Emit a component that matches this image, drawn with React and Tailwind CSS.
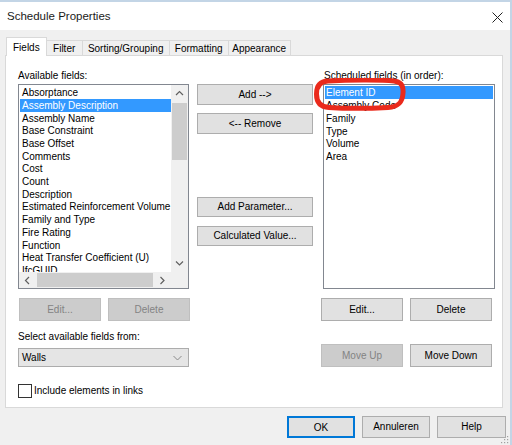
import React from "react";

const leftItems = [
  "Absorptance",
  "Assembly Description",
  "Assembly Name",
  "Base Constraint",
  "Base Offset",
  "Comments",
  "Cost",
  "Count",
  "Description",
  "Estimated Reinforcement Volume",
  "Family and Type",
  "Fire Rating",
  "Function",
  "Heat Transfer Coefficient (U)",
  "IfcGUID",
];
const rightItems = ["Element ID", "Assembly Code", "Family", "Type", "Volume", "Area"];

function Btn({ children, className = "", disabled = false }) {
  return (
    <div
      className={
        "flex items-center justify-center border text-[10px] leading-none " +
        (disabled
          ? "bg-[#cccccc] border-[#bfbfbf] text-[#838383] "
          : "bg-[#e1e1e1] border-[#adadad] text-black ") +
        className
      }
    >
      {children}
    </div>
  );
}

function Chevron({ dir }) {
  const d = {
    up: "M1 5 L4.5 1.5 L8 5",
    down: "M1 1.5 L4.5 5 L8 1.5",
    left: "M5 1 L1.5 4.5 L5 8",
    right: "M1.5 1 L5 4.5 L1.5 8",
  }[dir];
  const horiz = dir === "left" || dir === "right";
  return (
    <svg width={horiz ? 7 : 9} height={horiz ? 9 : 7} viewBox={horiz ? "0 0 7 9" : "0 0 9 7"}>
      <path d={d} fill="none" stroke="#606060" strokeWidth="1.2" />
    </svg>
  );
}

export default function App() {
  return (
    <div className="relative w-[512px] h-[445px] overflow-hidden bg-[#f0f0f0] border-t-2 border-r-2 border-[#c3d5e6] flex flex-col font-['Liberation_Sans',Arial,sans-serif] text-[10px] text-black">
      {/* title bar */}
      <div className="h-[28px] bg-white flex items-center justify-between pl-[7px] pr-[7px] pt-[2px] shrink-0">
        <span className="text-[11.5px] text-[#1a1a1a]">Schedule Properties</span>
        <svg width="11" height="11" viewBox="0 0 11 11">
          <path d="M0.5 0.5 L10.5 10.5 M10.5 0.5 L0.5 10.5" stroke="#222" strokeWidth="1" />
        </svg>
      </div>

      {/* tabs */}
      <div className="mt-[7px] ml-[6px] h-[18px] flex items-end relative z-10">
        <div className="h-[19px] -mb-px px-[6px] bg-white border border-b-0 border-[#d9d9d9] flex items-center">Fields</div>
        <div className="h-[15px] w-[37px] -ml-px border border-b-0 border-[#d9d9d9] flex items-center justify-center">Filter</div>
        <div className="h-[15px] w-[88px] -ml-px border border-b-0 border-[#d9d9d9] flex items-center justify-center">Sorting/Grouping</div>
        <div className="h-[15px] w-[60px] -ml-px border border-b-0 border-[#d9d9d9] flex items-center justify-center">Formatting</div>
        <div className="h-[15px] w-[63px] -ml-px border border-b-0 border-[#d9d9d9] flex items-center justify-center">Appearance</div>
      </div>

      {/* panel */}
      <div className="ml-[5px] w-[498px] h-[353px] shrink-0 bg-white border border-[#d9d9d9] flex pl-[12px]">
        {/* left column */}
        <div className="w-[172px] flex flex-col">
          <div className="mt-[14px] h-[12px] leading-[12px]">Available fields:</div>
          <div className="mt-[2px] w-[171px] h-[205px] border border-[#828790] flex flex-col">
            <div className="flex flex-1 min-h-0">
              <div className="w-[152px] overflow-hidden pt-[1.3px] pl-px">
                {leftItems.map((t, i) => (
                  <div
                    key={t}
                    className={
                      "h-[12.7px] leading-[14px] pl-[2px] whitespace-nowrap " +
                      (i === 1 ? "bg-[#3399ff] text-white" : "")
                    }
                  >
                    {t}
                  </div>
                ))}
              </div>
              <div className="w-[17px] bg-[#f0f0f0] flex flex-col">
                <div className="h-[17px] flex items-center justify-center">
                  <Chevron dir="up" />
                </div>
                <div className="mt-px mx-px h-[57px] bg-[#cdcdcd]" />
                <div className="flex-1" />
                <div className="h-[17px] flex items-center justify-center">
                  <Chevron dir="down" />
                </div>
              </div>
            </div>
            <div className="h-[16px] flex">
              <div className="w-[152px] bg-[#f0f0f0] flex items-center">
                <div className="w-[17px] flex items-center justify-center">
                  <Chevron dir="left" />
                </div>
                <div className="ml-px w-[116px] h-[14px] bg-[#cdcdcd]" />
                <div className="flex-1 flex items-center justify-center">
                  <Chevron dir="right" />
                </div>
              </div>
              <div className="w-[17px] bg-[#f0f0f0]" />
            </div>
          </div>
          <div className="mt-[9px] ml-px flex gap-[7px]">
            <Btn disabled className="w-[82px] h-[23px]">Edit...</Btn>
            <Btn disabled className="w-[82px] h-[23px]">Delete</Btn>
          </div>
          <div className="mt-[10px] h-[12px] leading-[12px]">Select available fields from:</div>
          <div className="mt-[5px] w-[171px] h-[19px] bg-[#e5e5e5] border border-[#acacac] flex items-center justify-between pl-[3px] pr-[6px]">
            <span>Walls</span>
            <svg width="9" height="6" viewBox="0 0 9 6">
              <path d="M0.5 1 L4.5 5 L8.5 1" fill="none" stroke="#8a8a8a" strokeWidth="1" />
            </svg>
          </div>
          <div className="mt-[16px] flex items-center">
            <div className="w-[14px] h-[14px] border border-[#333] bg-white" />
            <span className="ml-[2px]">Include elements in links</span>
          </div>
        </div>

        {/* middle column */}
        <div className="ml-[7px] w-[116px] flex flex-col">
          <Btn className="mt-[28px] h-[21px]">Add --&gt;</Btn>
          <Btn className="mt-[8px] h-[21px]">&lt;-- Remove</Btn>
          <Btn className="mt-[63px] h-[20px]">Add Parameter...</Btn>
          <Btn className="mt-[9px] h-[20px]">Calculated Value...</Btn>
        </div>

        {/* right column */}
        <div className="ml-[8px] w-[173px] flex flex-col">
          <div className="mt-[14px] ml-[3px] h-[12px] leading-[12px]">Scheduled fields (in order):</div>
          <div className="mt-[2px] ml-[2px] w-[172px] h-[205px] border border-[#828790] pt-[1.3px] px-px">
            {rightItems.map((t, i) => (
              <div
                key={t}
                className={
                  "h-[12.75px] leading-[14px] pl-px whitespace-nowrap overflow-hidden " +
                  (i === 0 ? "bg-[#3399ff] text-white" : "")
                }
              >
                {t}
              </div>
            ))}
          </div>
          <div className="mt-[9px] flex gap-[7px]">
            <Btn className="w-[82px] h-[23px]">Edit...</Btn>
            <Btn className="w-[82px] h-[23px]">Delete</Btn>
          </div>
          <div className="mt-[23px] flex gap-[7px]">
            <Btn disabled className="w-[82px] h-[23px]">Move Up</Btn>
            <Btn className="w-[82px] h-[23px]">Move Down</Btn>
          </div>
        </div>
      </div>

      {/* bottom buttons */}
      <div className="mt-[8px] flex justify-end gap-[7px] pr-[4px]">
        <div className="w-[68px] h-[22px] bg-[#e1e1e1] border-2 border-[#0078d7] flex items-center justify-center">OK</div>
        <Btn className="w-[68px] h-[22px]">Annuleren</Btn>
        <Btn className="w-[69px] h-[22px]">Help</Btn>
      </div>

      {/* size grip */}
      <svg className="absolute right-[1px] bottom-[1px]" width="8" height="8" viewBox="0 0 8 8">
        <rect x="6" y="0" width="1.2" height="1.2" fill="#a0a0a0" />
        <rect x="3" y="3" width="1.2" height="1.2" fill="#a0a0a0" />
        <rect x="6" y="3" width="1.2" height="1.2" fill="#a0a0a0" />
        <rect x="0" y="6" width="1.2" height="1.2" fill="#a0a0a0" />
        <rect x="3" y="6" width="1.2" height="1.2" fill="#a0a0a0" />
        <rect x="6" y="6" width="1.2" height="1.2" fill="#a0a0a0" />
      </svg>

      {/* red annotation ellipse */}
      <svg className="absolute left-[314px] top-[76px]" width="92" height="33" viewBox="0 0 92 33">
        <path
          d="M14 3 C 40 1.5, 70 2, 80 3 C 88 4, 89.5 9, 89 15 C 88.5 25, 84 29, 74 29.5 C 55 30.5, 30 30.5, 15 29.5 C 6 29, 2.5 24, 2.5 16 C 2.5 8, 6 3.3, 14 3 Z"
          fill="none"
          stroke="#ea2a1c"
          strokeWidth="5"
        />
      </svg>
    </div>
  );
}
